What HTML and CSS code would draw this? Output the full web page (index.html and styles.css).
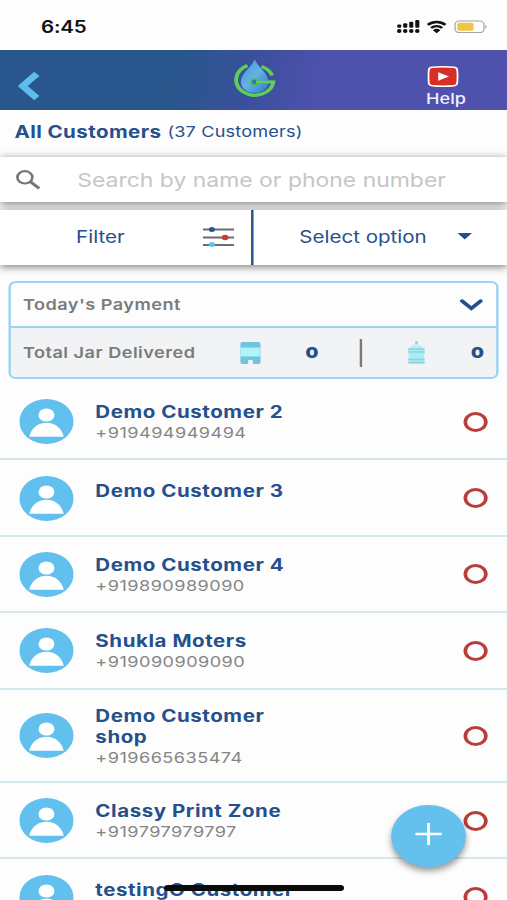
FILE: index.html
```html
<!DOCTYPE html>
<html lang="en">
<head>
  <meta charset="UTF-8">
  <title>All Customers</title>
  <link rel="stylesheet" href="styles.css">
</head>
<body>
  <svg class="defs" width="0" height="0">
    <symbol id="avatar" viewBox="0 0 45 45">
      <circle cx="22.5" cy="22.5" r="22.5" fill="#62c0ee"/>
      <circle cx="22.5" cy="16" r="6.6" fill="#fff"/>
      <path d="M8.2 37.8C10 29 15.5 23.8 22.5 23.8S35 29 36.8 37.8Z" fill="#fff"/>
    </symbol>
  </svg>

  <div class="screen">
    <div class="status">
      <span class="time">6:45</span>
      <svg class="status-icons" width="74" height="16" viewBox="0 0 74 16">
        <g fill="#111">
          <rect x="0" y="5.5" width="3.4" height="3.2" rx="1"/>
          <rect x="5" y="4.3" width="3.4" height="4.400" rx="1"/>
          <rect x="10" y="2.8" width="3.4" height="5.9" rx="1"/>
          <rect x="15" y="1" width="3.4" height="7.7" rx="1"/>
          <circle cx="1.7" cy="12" r="1.9"/>
          <circle cx="6.7" cy="12" r="1.9"/>
          <circle cx="11.7" cy="12" r="1.9"/>
          <circle cx="16.7" cy="12" r="1.9"/>
          <path d="M29.6 11.300a4 4 0 0 1 6.200 0L32.700 14.300Z"/>
        </g>
        <g fill="none" stroke="#111" stroke-width="2.4">
          <path d="M25.4 5.900a10.600 10.600 0 0 1 14.600 0"/>
          <path d="M28.1 9a6.600 6.600 0 0 1 9.200 0"/>
        </g>
        <rect x="48" y="2" width="24" height="11.600" rx="3.5" fill="#fff" stroke="#a3a3a3"/>
        <rect x="49.8" y="3.8" width="13.5" height="8" rx="1.5" fill="#f3c546"/>
        <path d="M73 6v3.600q1.500-.6 1.500-1.800T73 6Z" fill="#a3a3a3"/>
      </svg>
    </div>

    <div class="header">
      <svg class="back" width="18" height="30" viewBox="0 0 18 30">
        <path d="M15.5 2.800 3.800 15l11.700 12.200" fill="none" stroke="#5ebdea" stroke-width="6"/>
      </svg>
      <svg class="logo" width="36" height="42" viewBox="0 0 36 42">
        <defs>
          <linearGradient id="drop" x1="0" y1="0" x2="1" y2="1">
            <stop offset="0" stop-color="#3f8fce"/>
            <stop offset=".5" stop-color="#65b3e6"/>
            <stop offset="1" stop-color="#2f78c2"/>
          </linearGradient>
        </defs>
        <path d="M12 7.500A15.500 15.500 0 1 0 33.500 24H18" fill="none" stroke="#5fcf58" stroke-width="3.2"/>
        <path d="M23.5 8.500a15.500 15.500 0 0 1 9 9" fill="none" stroke="#5fcf58" stroke-width="3"/>
        <path d="M18 1.500C21 10 29.500 15 29.500 24A11.500 11 0 0 1 6.500 24C6.500 15 15 10 18 1.500Z" fill="url(#drop)"/>
        <circle cx="18" cy="24" r="3" fill="#3276ae" stroke="#4cb765" stroke-width="1.7"/>
        <path d="M19 24h15" stroke="#5fcf58" stroke-width="2.6"/>
      </svg>
      <div class="help">
        <svg width="26" height="21" viewBox="0 0 26 21">
          <path d="M4 1.300Q13 .3 22 1.300q2.500.3 2.800 2.700.6 6.500 0 13-.3 2.400-2.800 2.700-9 1-18 0-2.500-.3-2.800-2.700-.6-6.500 0-13Q1.500 1.600 4 1.300Z" fill="#d92e23" stroke="#fff" stroke-width="1.6"/>
          <path d="M9 6.300v8.400l9-4.200Z" fill="#fff"/>
        </svg>
        <span>Help</span>
      </div>
    </div>

    <div class="heading">
      <h1>All Customers</h1>
      <span>(37 Customers)</span>
    </div>

    <div class="search">
      <svg width="21" height="20" viewBox="0 0 21 20">
        <circle cx="7.6" cy="7.3" r="6.2" fill="none" stroke="#777" stroke-width="2.2"/>
        <path d="m12 11.600 7.500 7" stroke="#777" stroke-width="2.8"/>
      </svg>
      <span>Search by name or phone number</span>
    </div>

    <div class="filters">
      <div class="filter">
        <span>Filter</span>
        <svg width="26" height="20" viewBox="0 0 26 20">
          <path d="M0 2.500h26M0 10.500h26M0 18h26" stroke="#6d6d6d" stroke-width="1.9"/>
          <circle cx="7.5" cy="2.5" r="2.5" fill="#24568e"/>
          <circle cx="18.5" cy="10.5" r="2.8" fill="#cc3b37"/>
          <circle cx="7.5" cy="17.5" r="2.500" fill="#5fc1e8"/>
        </svg>
      </div>
      <div class="select">
        <span>Select option</span>
        <svg width="12" height="7" viewBox="0 0 12 7"><path d="M0 0h12L6 6.500Z" fill="#24508a"/></svg>
      </div>
    </div>

    <div class="card">
      <div class="payment">
        <span>Today's Payment</span>
        <svg width="19" height="12" viewBox="0 0 19 12">
          <path d="m1.800 2 7.700 7.500 7.700-7.500" fill="none" stroke="#24508a" stroke-width="3.4" stroke-linecap="round"/>
        </svg>
      </div>
      <div class="jars">
        <span class="jars-label">Total Jar Delivered</span>
        <svg class="jar" width="17" height="22" viewBox="0 0 17 22">
          <rect width="17" height="22" rx="2" fill="#72c3df"/>
          <rect y="5.500" width="17" height="9" fill="#aef4f8"/>
          <path d="M6.500 22v-3.500q2-1.500 4 0V22Z" fill="#f1f3f4"/>
        </svg>
        <b class="count">0</b>
        <i class="bar"></i>
        <svg class="bottle" width="14" height="23" viewBox="0 0 14 23">
          <rect x="6" y="0" width="2" height="3" fill="#9ccddb"/>
          <path d="M1 8Q1 5 7 3q6 2 6 5Z" fill="#b9eff5"/>
          <rect x=".5" y="7" width="13" height="16" rx="1" fill="#a9ecf3"/>
          <path d="M0 8h14M0 11h14M0 18.500h14M0 21.500h14" stroke="#8bd3e1" stroke-width="1.3"/>
        </svg>
        <b class="count">0</b>
      </div>
    </div>

    <div class="list">
      <div class="row">
        <svg class="avatar"><use href="#avatar"/></svg>
        <div class="info"><div class="name">Demo Customer 2</div><div class="phone">+919494949494</div></div>
        <i class="ring"></i>
      </div>
      <div class="row">
        <svg class="avatar"><use href="#avatar"/></svg>
        <div class="info"><div class="name">Demo Customer 3</div><div class="phone"></div></div>
        <i class="ring"></i>
      </div>
      <div class="row">
        <svg class="avatar"><use href="#avatar"/></svg>
        <div class="info"><div class="name">Demo Customer 4</div><div class="phone">+919890989090</div></div>
        <i class="ring"></i>
      </div>
      <div class="row">
        <svg class="avatar"><use href="#avatar"/></svg>
        <div class="info"><div class="name">Shukla Moters</div><div class="phone">+919090909090</div></div>
        <i class="ring"></i>
      </div>
      <div class="row tall">
        <svg class="avatar"><use href="#avatar"/></svg>
        <div class="info"><div class="name">Demo Customer<br>shop</div><div class="phone">+919665635474</div></div>
        <i class="ring"></i>
      </div>
      <div class="row">
        <svg class="avatar"><use href="#avatar"/></svg>
        <div class="info"><div class="name">Classy Print Zone</div><div class="phone">+919797979797</div></div>
        <i class="ring"></i>
      </div>
      <div class="row">
        <svg class="avatar"><use href="#avatar"/></svg>
        <div class="info"><div class="name">testingO Customer</div><div class="phone"></div></div>
        <i class="ring"></i>
      </div>
    </div>

    <div class="fab">
      <svg width="22" height="22" viewBox="0 0 22 22"><path d="M11 0v22M0 11h22" stroke="#fff" stroke-width="2.4"/></svg>
    </div>
    <div class="home-bar"></div>
  </div>
</body>
</html>
```
FILE: styles.css
```css
* {
  box-sizing: border-box;
}
body {
  margin: 0;
  height: 900px;
  overflow: hidden;
  background: #fdfdfd;
  font-family: Inter, "Liberation Sans", sans-serif;
  color: #25508c;
}
svg {
  display: block;
  flex: none;
}
.defs {
  position: absolute;
}
.screen {
  position: relative;
  width: 420px;
  height: 900px;
  overflow: hidden;
  transform: scaleX(1.2071);
  transform-origin: 0 0;
  white-space: nowrap;
}
.status {
  display: flex;
  justify-content: space-between;
  align-items: center;
  height: 50px;
  padding: 3px 17px 0 34px;
}
.time {
  font-size: 17px;
  font-weight: 600;
  letter-spacing: -0.2px;
  color: #111;
}
.header {
  display: flex;
  align-items: center;
  justify-content: space-between;
  height: 60px;
  padding: 0 34px 0 15px;
  background: linear-gradient(100deg, #29568c 35%, #3d4f9e 51%, #4f52ad 64%);
}
.back {
  margin-top: 11px;
}
.logo {
  margin: 0 0 2px 36px;
}
.help {
  display: flex;
  flex-direction: column;
  padding-top: 13px;
  font-size: 15px;
  line-height: 18px;
  font-weight: 500;
  color: #eef0ff;
}
.help svg {
  margin-left: 1px;
}
.help span {
  margin-top: 3px;
}
.heading {
  display: flex;
  align-items: center;
  gap: 5px;
  height: 47px;
  padding: 0 0 3px 12px;
}
.heading h1 {
  margin: 0;
  font-size: 17px;
  letter-spacing: 0.35px;
}
.heading span {
  padding-bottom: 1px;
  font-size: 15px;
  letter-spacing: 0.15px;
}
.search {
  display: flex;
  align-items: center;
  height: 45px;
  padding-left: 13px;
  background: #fff;
  box-shadow: 0 2px 8px rgba(0, 0, 0, 0.5);
  font-size: 19px;
  color: #c6c6c6;
}
.search span {
  margin: 1px 0 0 30px;
}
.filters {
  display: flex;
  height: 55px;
  margin-top: 8px;
  background: #fff;
  box-shadow: 0 2px 7px rgba(0, 0, 0, 0.5);
  font-size: 17px;
}
.filter,
.select {
  display: flex;
  align-items: center;
  justify-content: space-between;
  padding-bottom: 2px;
}
.filter {
  width: 210px;
  padding-left: 63px;
  padding-right: 14px;
  border-right: 2px solid #24508a;
}
.select {
  flex: 1;
  padding-left: 38px;
  padding-right: 29px;
}
.card {
  margin: 16px 7px 0;
  height: 98px;
  border: 2px solid #9bd4f0;
  border-radius: 6px;
  overflow: hidden;
  font-size: 15px;
  font-weight: 600;
  letter-spacing: 0.4px;
  color: #7b7b7b;
}
.payment {
  display: flex;
  align-items: center;
  justify-content: space-between;
  height: 45px;
  padding: 0 11px 0 10px;
  border-bottom: 2px solid #9bd4f0;
}
.jars {
  display: flex;
  align-items: center;
  height: 49px;
  padding-left: 10px;
  background: #f1f3f4;
}
.jars-label {
  width: 180px;
}
.count {
  letter-spacing: 0;
  color: #24508a;
}
.jar {
  margin-right: 37px;
}
.bar {
  width: 2.5px;
  height: 28px;
  margin: 0 38px 0 34px;
  background: #7b7b7b;
}
.bottle {
  margin-right: 38px;
}
.list {
  margin-top: 5px;
}
.row {
  display: flex;
  align-items: center;
  height: 76.4px;
  padding: 1px 16px 0;
  border-bottom: 2px solid #d6e6ef;
}
.row.tall {
  height: 93.5px;
}
.avatar {
  width: 45px;
  height: 45px;
}
.info {
  flex: 1;
  margin-left: 18px;
  padding-top: 1px;
}
.name {
  font-size: 17px;
  line-height: 21px;
  font-weight: 700;
  letter-spacing: 0.45px;
}
.phone {
  height: 19px;
  font-size: 15px;
  line-height: 19px;
  letter-spacing: 0.38px;
  color: #858585;
}
.phone:empty {
  height: 15px;
}
.ring {
  width: 20px;
  height: 20px;
  border: 3px solid #ba3d39;
  border-radius: 50%;
}
.fab {
  position: absolute;
  left: 324px;
  top: 805px;
  display: flex;
  align-items: center;
  justify-content: center;
  width: 62px;
  height: 62px;
  padding-bottom: 4px;
  border-radius: 50%;
  background: #64c1ee;
  box-shadow: 0 4px 6px rgba(0, 0, 0, 0.4);
}
.home-bar {
  position: absolute;
  left: 136px;
  top: 885px;
  width: 149px;
  height: 6px;
  border-radius: 3px;
  background: #0b0b0b;
}
```
